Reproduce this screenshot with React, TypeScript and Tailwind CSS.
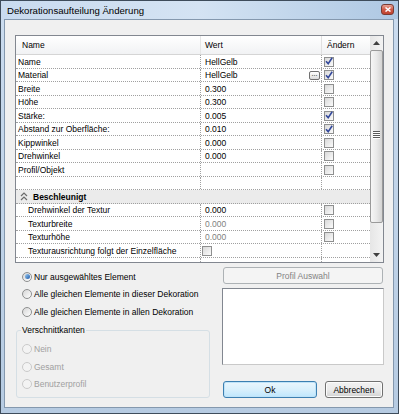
import clsx from 'clsx';

const FONT = "font-['Liberation_Sans',Arial,sans-serif]";

type PropRow = {
  name: string;
  value?: string;
  checked?: boolean;
  dots?: boolean;
  noCheck?: boolean;
  dim?: boolean;
  indent?: boolean;
  valueCheck?: boolean;
};

const rows: PropRow[] = [
  { name: 'Name', value: 'HellGelb', checked: true },
  { name: 'Material', value: 'HellGelb', checked: true, dots: true },
  { name: 'Breite', value: '0.300' },
  { name: 'Höhe', value: '0.300' },
  { name: 'Stärke:', value: '0.005', checked: true },
  { name: 'Abstand zur Oberfläche:', value: '0.010', checked: true },
  { name: 'Kippwinkel', value: '0.000' },
  { name: 'Drehwinkel', value: '0.000' },
  { name: 'Profil/Objekt', value: '' },
  { name: '', value: '', noCheck: true },
];

const fastRows: PropRow[] = [
  { name: 'Drehwinkel der Textur', value: '0.000', indent: true },
  { name: 'Texturbreite', value: '0.000', indent: true, dim: true },
  { name: 'Texturhöhe', value: '0.000', indent: true, dim: true },
  { name: 'Texturausrichtung folgt der Einzelfläche', indent: true, valueCheck: true, noCheck: true },
];

function CheckBox({ on }: { on?: boolean }) {
  return (
    <span className="flex h-[10px] w-[10px] shrink-0 items-center justify-center border border-[#8e8f8f] bg-gradient-to-br from-[#d9d9d9] to-[#fbfbfb]">
      {on && (
        <svg width="8" height="8" viewBox="0 0 8 8" className="-mt-[1px]">
          <path d="M1 4.2 L3.2 6.6 L7.2 0.8" fill="none" stroke="#34499b" strokeWidth="1.6" />
        </svg>
      )}
    </span>
  );
}

function Radio({ on, disabled }: { on?: boolean; disabled?: boolean }) {
  return (
    <span
      className={clsx(
        'flex h-[10px] w-[10px] shrink-0 items-center justify-center rounded-full border',
        disabled
          ? 'border-[#cacaca] bg-[#f3f3f3]'
          : 'border-[#8e8f8f] bg-gradient-to-br from-[#d6d6d6] to-white'
      )}
    >
      {on && <span className="h-[5px] w-[5px] rounded-full bg-gradient-to-br from-[#9ccdf3] to-[#1d5aa8]" />}
    </span>
  );
}

function Row({ row, i }: { row: PropRow; i: number }) {
  return (
    <div
      className={clsx(
        'flex shrink-0 border-b border-dotted border-[#a0a0a0]',
        i % 2 === 0 ? 'h-[14px]' : 'h-[13px]'
      )}
    >
      <div
        className={clsx(
          'flex w-[185px] items-center whitespace-nowrap border-r border-dotted border-[#a0a0a0]',
          row.indent ? 'pl-[12px]' : 'pl-[2px]'
        )}
      >
        {row.name}
      </div>
      <div
        className={clsx(
          'flex w-[121px] items-center border-r border-dotted border-[#a0a0a0] pr-[1px]',
          row.valueCheck ? 'pl-[1px]' : 'pl-[4px]',
          row.dim ? 'text-[#7f7f7f]' : 'text-black'
        )}
      >
        {row.valueCheck ? <CheckBox /> : row.value}
        {row.dots && (
          <span className="ml-auto flex h-[9px] w-[11px] items-center justify-center rounded-[2px] border border-[#707070] bg-gradient-to-b from-white to-[#dcdcdc] pb-[3px] text-[7px] leading-none">
            ...
          </span>
        )}
      </div>
      <div className="flex flex-1 items-center pl-[2px]">{!row.noCheck && <CheckBox on={row.checked} />}</div>
    </div>
  );
}

function ScrollBar() {
  return (
    <div className="flex w-[13px] flex-col bg-gradient-to-r from-[#e6e6e6] to-[#f3f3f3]">
      <div className="flex h-[14px] items-center justify-center">
        <svg width="7" height="4" viewBox="0 0 7 4">
          <path d="M0 4 L3.5 0 L7 4 Z" fill="#3f3f3f" />
        </svg>
      </div>
      <div className="flex h-[173px] items-center justify-center rounded-[2px] border border-[#9a9a9a] bg-gradient-to-r from-[#f6f6f6] via-[#e9e9e9] to-[#d4d4d4]">
        <svg width="7" height="8" viewBox="0 0 7 8" className="-mt-[4px]">
          <path d="M0 0.5 H7 M0 2.5 H7 M0 4.5 H7 M0 6.5 H7" stroke="#5a5a5a" strokeWidth="1" />
          <path d="M0 1.5 H7 M0 3.5 H7 M0 5.5 H7 M0 7.5 H7" stroke="#ffffff" strokeWidth="1" />
        </svg>
      </div>
      <div className="flex-1" />
      <div className="flex h-[14px] items-center justify-center">
        <svg width="7" height="4" viewBox="0 0 7 4">
          <path d="M0 0 L3.5 4 L7 0 Z" fill="#3f3f3f" />
        </svg>
      </div>
    </div>
  );
}

export default function App() {
  return (
    <div
      className={clsx(
        FONT,
        'relative h-[414px] w-[399px] border border-[#3e4c5b] bg-gradient-to-b from-[#cbdcef] to-[#b6cbe2] text-[8.5px] leading-[10px] text-black'
      )}
    >
      {/* title bar */}
      <div className="flex h-[18px] items-center bg-gradient-to-r from-[#c9dbef] via-[#d4e3f3] to-[#aec8e3] pl-[6px] pt-[1px] text-[9.6px] leading-none text-black">
        Dekorationsaufteilung Änderung
      </div>
      <button className="absolute left-[380px] top-[3px] flex h-[11px] w-[13px] items-center justify-center rounded-[3px] border border-[#7a3b33] bg-gradient-to-b from-[#e8a294] via-[#cf5a48] to-[#c0432f]">
        <svg width="6" height="5" viewBox="0 0 6 5">
          <path d="M0.5 0.5 L5.5 4.5 M5.5 0.5 L0.5 4.5" stroke="#ffffff" strokeWidth="1.5" />
        </svg>
      </button>

      {/* client area */}
      <div className="ml-[3px] mr-[4px] h-[389px] border border-[#8498ae] bg-[#f0f0f0]">
        {/* property grid */}
        <div className="ml-[10px] mt-[15px] flex h-[228px] w-[369px] border border-[#828790] bg-white">
          <div className="flex w-[354px] flex-col overflow-hidden">
            <div className="flex h-[19px] shrink-0 border-b border-[#d5d5d5] bg-gradient-to-b from-white to-[#f1f2f4]">
              <div className="flex w-[185px] items-center border-r border-[#e5e5e5] pl-[6px]">Name</div>
              <div className="flex w-[121px] items-center border-r border-[#e0e0e0] pl-[4px]">Wert</div>
              <div className="flex flex-1 items-center pl-[5px]">Ändern</div>
            </div>
            {rows.map((r, i) => (
              <Row key={i} row={r} i={i} />
            ))}
            <div className="flex h-[14px] shrink-0 items-center gap-[5px] border-b border-dotted border-[#a0a0a0] bg-[#ebebeb] pl-[4px] font-bold">
              <svg width="8" height="9" viewBox="0 0 8 9">
                <path d="M1 4 L4 1 L7 4 M1 8 L4 5 L7 8" fill="none" stroke="#6b6b6b" strokeWidth="1.2" />
              </svg>
              Beschleunigt
            </div>
            {fastRows.map((r, i) => (
              <Row key={i} row={r} i={i + 11} />
            ))}
            <Row row={{ name: '', noCheck: true }} i={15} />
          </div>
          <ScrollBar />
        </div>

        {/* lower part */}
        <div className="flex">
          <div className="ml-[11px] flex w-[194px] flex-col pt-[5px]">
            <label className="flex h-[17px] items-center gap-[2px] pl-[6px]">
              <Radio on />
              <span>Nur ausgewähltes Element</span>
            </label>
            <label className="flex h-[18px] items-center gap-[2px] pl-[6px]">
              <Radio />
              <span>Alle gleichen Elemente in dieser Dekoration</span>
            </label>
            <label className="flex h-[17px] items-center gap-[2px] pl-[6px]">
              <Radio />
              <span>Alle gleichen Elemente in allen Dekoration</span>
            </label>
            <fieldset className="mt-[5px] h-[73px] rounded-[3px] border border-[#d5dfe5] pt-[5px]">
              <legend className="ml-[4px] px-[1px] leading-[10px]">Verschnittkanten</legend>
              <div className="flex h-[17px] items-center gap-[2px] pl-[5px] text-[#a0a0a0]">
                <Radio disabled />
                <span>Nein</span>
              </div>
              <div className="mt-[1px] flex h-[17px] items-center gap-[2px] pl-[5px] text-[#a0a0a0]">
                <Radio disabled />
                <span>Gesamt</span>
              </div>
              <div className="flex h-[17px] items-center gap-[2px] pl-[5px] text-[#a0a0a0]">
                <Radio disabled />
                <span>Benutzerprofil</span>
              </div>
            </fieldset>
          </div>

          <div className="ml-[12px] flex w-[162px] flex-col pt-[4px]">
            <button className="mx-[1px] flex h-[17px] items-center justify-center rounded-[3px] border border-[#adb2b5] bg-[#f4f4f4] text-[#838383]">
              Profil Auswahl
            </button>
            <div className="mt-[4px] h-[77px] border border-[#828790] border-b-[#c9c9c9] border-r-[#c9c9c9] bg-white" />
            <div className="mt-[16px] flex gap-[8px] pl-[1px] pr-[1px]">
              <button className="flex h-[17px] w-[94px] items-center justify-center rounded-[3px] border border-[#3c7fb1] bg-gradient-to-b from-[#eaf6fd] via-[#d9f0fc] to-[#bee6fd] shadow-[inset_0_0_0_1px_#bfe3f8]">
                Ok
              </button>
              <button className="flex h-[17px] w-[58px] items-center justify-center rounded-[3px] border border-[#707070] bg-gradient-to-b from-[#f2f2f2] via-[#ebebeb] to-[#d2d2d2] shadow-[inset_0_0_0_1px_#fcfcfc]">
                Abbrechen
              </button>
            </div>
          </div>
        </div>
      </div>
    </div>
  );
}
